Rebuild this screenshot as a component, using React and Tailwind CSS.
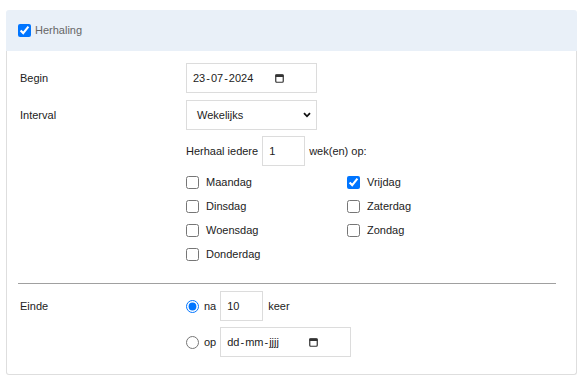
import React from "react";

function CalIcon() {
  return (
    <svg width="9" height="10" viewBox="0 0 9 10" className="shrink-0">
      <rect x="0.75" y="1.75" width="7.5" height="7.5" rx="1" fill="none" stroke="#333" strokeWidth="1.2" />
      <rect x="0.5" y="1.5" width="8" height="2.5" fill="#333" />
    </svg>
  );
}

function DateBox({ parts }) {
  return (
    <div className="h-[30px] w-[131px] border border-[#dcdcdc] flex items-center pl-[6px] text-[#222]">
      <span className="w-[82px] whitespace-nowrap flex">
        <span className="pr-[1px]">{parts[0]}</span>
        <span>-</span>
        <span className="px-[1px]">{parts[1]}</span>
        <span>-</span>
        <span className="pl-[1px]">{parts[2]}</span>
      </span>
      <CalIcon />
    </div>
  );
}

function Day({ label, checked }) {
  return (
    <label className="h-[24px] flex items-center gap-[7px]">
      <input type="checkbox" defaultChecked={checked} className="m-0 w-[13px] h-[13px]" />
      <span>{label}</span>
    </label>
  );
}

export default function App() {
  return (
    <div className="pt-[10px] pl-[6px] bg-white min-h-[383px]">
      <div className="w-[571px] font-['Liberation_Sans',Arial,sans-serif] text-[11px] text-[#222]">
        <div className="h-[41px] bg-[#e9f0f8] rounded-t-[3px] flex items-center pl-[12px] gap-[4px]">
          <input type="checkbox" defaultChecked className="m-0 w-[13px] h-[13px]" />
          <span className="text-[#666]">Herhaling</span>
        </div>
        <div className="border-x border-b border-[#dedede] rounded-b-[3px] pl-[11px] pr-[20px] pt-[12px] pb-[17px]">
          <div className="flex items-center h-[30px]">
            <div className="w-[168px] pl-[2px]">Begin</div>
            <DateBox parts={["23", "07", "2024"]} />
          </div>
          <div className="flex items-center h-[30px] mt-[7px]">
            <div className="w-[168px] pl-[2px]">Interval</div>
            <div className="h-[30px] w-[131px] border border-[#dcdcdc] flex items-center pl-[10px] pr-[5px]">
              <span>Wekelijks</span>
              <svg width="8" height="6" viewBox="0 0 8 6" className="ml-auto">
                <path d="M1 1.2 L4 4.3 L7 1.2" fill="none" stroke="#111" strokeWidth="1.8" />
              </svg>
            </div>
          </div>
          <div className="flex items-center h-[30px] mt-[6px]">
            <div className="w-[168px]"></div>
            <span>Herhaal iedere</span>
            <div className="ml-[4px] h-[30px] w-[43px] border border-[#dcdcdc] flex items-center pl-[6px]">1</div>
            <span className="ml-[4px]">wek(en) op:</span>
          </div>
          <div className="flex mt-[4px]">
            <div className="w-[168px]"></div>
            <div className="grid grid-cols-[161px_161px]">
              <div className="flex flex-col">
                <Day label="Maandag" />
                <Day label="Dinsdag" />
                <Day label="Woensdag" />
                <Day label="Donderdag" />
              </div>
              <div className="flex flex-col">
                <Day label="Vrijdag" checked />
                <Day label="Zaterdag" />
                <Day label="Zondag" />
              </div>
            </div>
          </div>
          <div className="mt-[17px] border-t border-[#a0a0a0]"></div>
          <div className="flex mt-[7px]">
            <div className="w-[168px] pl-[2px] h-[30px] flex items-center">Einde</div>
            <div className="flex flex-col gap-[6px]">
              <div className="flex items-center h-[30px]">
                <input type="radio" name="einde" defaultChecked className="m-0 w-[13px] h-[13px]" />
                <span className="ml-[5px]">na</span>
                <div className="ml-[4px] h-[30px] w-[43px] border border-[#dcdcdc] flex items-center pl-[6px]">10</div>
                <span className="ml-[5px]">keer</span>
              </div>
              <div className="flex items-center h-[30px]">
                <input type="radio" name="einde" className="m-0 w-[13px] h-[13px]" />
                <span className="ml-[5px]">op</span>
                <div className="ml-[4px]">
                  <DateBox parts={["dd", "mm", "jjjj"]} />
                </div>
              </div>
            </div>
          </div>
        </div>
      </div>
    </div>
  );
}
